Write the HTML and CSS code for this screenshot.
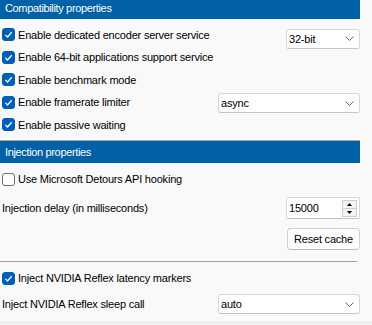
FILE: index.html
```
<!DOCTYPE html>
<html lang="en">
<head>
  <meta charset="UTF-8">
  <title>Properties</title>
  <link rel="stylesheet" href="styles.css">
</head>
<body>
  <div class="panel">
    <section class="group group-compat">
      <div class="group-title">Compatibility properties</div>
      <div class="group-body">
        <div class="row">
          <span class="check on"><svg width="13" height="13" viewBox="0 0 13 13"><path d="M3.4 6.9 L5.5 9 L9.7 4.3" fill="none" stroke="#fff" stroke-width="1.3"/></svg></span>
          <span class="label">Enable dedicated encoder server service</span>
          <span class="combo combo-short">32-bit<svg class="chev" width="9" height="5" viewBox="0 0 9 5"><path d="M0.5 0.5 L4.5 4.5 L8.5 0.5" fill="none" stroke="#666" stroke-width="1"/></svg></span>
        </div>
        <div class="row">
          <span class="check on"><svg width="13" height="13" viewBox="0 0 13 13"><path d="M3.4 6.9 L5.5 9 L9.7 4.3" fill="none" stroke="#fff" stroke-width="1.3"/></svg></span>
          <span class="label">Enable 64-bit applications support service</span>
        </div>
        <div class="row">
          <span class="check on"><svg width="13" height="13" viewBox="0 0 13 13"><path d="M3.4 6.9 L5.5 9 L9.7 4.3" fill="none" stroke="#fff" stroke-width="1.3"/></svg></span>
          <span class="label">Enable benchmark mode</span>
        </div>
        <div class="row">
          <span class="check on"><svg width="13" height="13" viewBox="0 0 13 13"><path d="M3.4 6.9 L5.5 9 L9.7 4.3" fill="none" stroke="#fff" stroke-width="1.3"/></svg></span>
          <span class="label">Enable framerate limiter</span>
          <span class="combo combo-wide combo-low">async<svg class="chev" width="9" height="5" viewBox="0 0 9 5"><path d="M0.5 0.5 L4.5 4.5 L8.5 0.5" fill="none" stroke="#666" stroke-width="1"/></svg></span>
        </div>
        <div class="row">
          <span class="check on"><svg width="13" height="13" viewBox="0 0 13 13"><path d="M3.4 6.9 L5.5 9 L9.7 4.3" fill="none" stroke="#fff" stroke-width="1.3"/></svg></span>
          <span class="label">Enable passive waiting</span>
        </div>
      </div>
    </section>

    <section class="group group-inject">
      <div class="group-title">Injection properties</div>
      <div class="group-body">
        <div class="row">
          <span class="check"></span>
          <span class="label">Use Microsoft Detours API hooking</span>
        </div>
        <div class="row row-delay">
          <span class="text">Injection delay (in milliseconds)</span>
          <span class="spin">
            <span class="spin-value">15000</span>
            <span class="spin-buttons">
              <span class="spin-btn"><svg width="5" height="3" viewBox="0 0 5 3"><path d="M0 3 L2.5 0 L5 3 Z" fill="#000"/></svg></span>
              <span class="spin-btn"><svg width="5" height="3" viewBox="0 0 5 3"><path d="M0 0 L2.5 3 L5 0 Z" fill="#000"/></svg></span>
            </span>
          </span>
        </div>
        <div class="row-button">
          <button class="btn">Reset cache</button>
        </div>
        <hr class="sep">
        <div class="row row-reflex">
          <span class="check on"><svg width="13" height="13" viewBox="0 0 13 13"><path d="M3.4 6.9 L5.5 9 L9.7 4.3" fill="none" stroke="#fff" stroke-width="1.3"/></svg></span>
          <span class="label">Inject NVIDIA Reflex latency markers</span>
        </div>
        <div class="row row-sleep">
          <span class="text">Inject NVIDIA Reflex sleep call</span>
          <span class="combo combo-wide">auto<svg class="chev" width="9" height="5" viewBox="0 0 9 5"><path d="M0.5 0.5 L4.5 4.5 L8.5 0.5" fill="none" stroke="#666" stroke-width="1"/></svg></span>
        </div>
      </div>
    </section>
  </div>
  <div class="statusbar"></div>
</body>
</html>
```

FILE: styles.css
```
body {
  margin: 0;
  padding: 0;
  background-color: #f9f9f9;
  font-family: "Liberation Sans", Arial, sans-serif;
  font-size: 11px;
  letter-spacing: -0.2px;
  color: #000;
  overflow: hidden;
}

.panel {
  width: 360px;
  margin-top: -4px;
}

.group-title {
  height: 22px;
  line-height: 22px;
  border-top: 1px solid #a8a8a8;
  background-color: #0060a8;
  color: #fff;
  padding-left: 5px;
  letter-spacing: -0.35px;
}

.group-compat .group-body {
  padding: 4.25px 0 4.25px 0;
}

.group-inject .group-body {
  padding-top: 4.75px;
}

.row {
  height: 22.5px;
  display: flex;
  align-items: center;
  padding-left: 2px;
}

.check {
  width: 11px;
  height: 11px;
  border: 1px solid #6e6e6e;
  border-radius: 3px;
  background-color: #fdfdfd;
  flex: none;
  display: flex;
  align-items: center;
  justify-content: center;
}

.check.on {
  border-color: #005fb8;
  background-color: #005fb8;
}

.check svg {
  margin: -1px;
}

.label {
  margin-left: 3px;
}

.combo {
  margin-left: auto;
  height: 18px;
  box-sizing: content-box;
  border: 1px solid #d6d6d6;
  border-bottom-color: #c4c4c4;
  border-radius: 3px;
  background-color: #fff;
  display: flex;
  align-items: center;
  padding: 0 5px 0 2px;
  flex: none;
}

.combo-short {
  width: 65px;
  margin-top: 8px;
}

.combo-wide {
  width: 133px;
}

.combo-low {
  margin-top: 2px;
}

.chev {
  margin-left: auto;
}

.row-delay {
  height: 24px;
  margin-top: 5.75px;
}

.spin {
  margin-left: auto;
  width: 72px;
  height: 20px;
  border: 1px solid #d6d6d6;
  border-bottom-color: #c4c4c4;
  border-radius: 2px;
  background-color: #fff;
  display: flex;
  align-items: center;
}

.spin-value {
  padding-left: 2px;
}

.spin-buttons {
  margin-left: auto;
  margin-right: 2px;
  display: flex;
  flex-direction: column;
}

.spin-btn {
  width: 13px;
  height: 7px;
  border: 1px solid #cfcfcf;
  background-color: #f3f3f3;
  display: flex;
  align-items: center;
  justify-content: center;
}

.spin-btn + .spin-btn {
  border-top: none;
}

.row-button {
  margin-top: 8px;
  display: flex;
  justify-content: flex-end;
}

.btn {
  width: 73px;
  height: 22px;
  padding: 0;
  font-family: inherit;
  font-size: 11px;
  letter-spacing: -0.2px;
  color: #000;
  background-color: #fdfdfd;
  border: 1px solid #d0d0d0;
  border-bottom-color: #bdbdbd;
  border-radius: 4px;
}

.sep {
  margin: 11px 3px 0 0;
  height: 1px;
  border: none;
  background-color: #a0a0a0;
}

.row-reflex {
  margin-top: 4.75px;
}

.row-sleep {
  margin-top: 3.5px;
}

.text {
  margin-left: 0;
}

.statusbar {
  margin-top: 5.75px;
  height: 10px;
  background-color: #efefef;
}
```
